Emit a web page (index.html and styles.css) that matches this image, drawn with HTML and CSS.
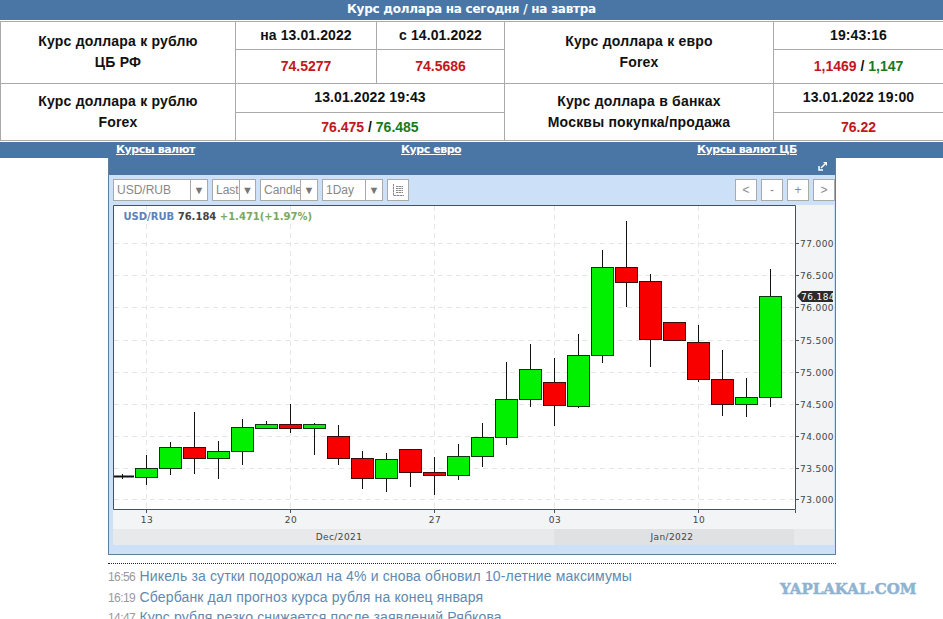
FILE: index.html
```html
<!DOCTYPE html>
<html lang="ru">
<head>
  <meta charset="UTF-8" />
  <title>Курс доллара</title>
  <link rel="stylesheet" href="styles.css">
</head>
<body>
  <div class="title-bar">Курс доллара на сегодня / на завтра</div>
  <table class="rates">
    <colgroup>
      <col class="c1"><col class="c2"><col class="c3"><col class="c4"><col class="c5">
    </colgroup>
    <tr class="r1">
      <th rowspan="2">Курс доллара к рублю<br>ЦБ РФ</th>
      <td>на 13.01.2022</td>
      <td>с 14.01.2022</td>
      <th rowspan="2">Курс доллара к евро<br>Forex</th>
      <td>19:43:16</td>
    </tr>
    <tr class="r2">
      <td class="red">74.5277</td>
      <td class="red">74.5686</td>
      <td><span class="red">1,1469</span> / <span class="green">1,147</span></td>
    </tr>
    <tr class="r3">
      <th rowspan="2">Курс доллара к рублю<br>Forex</th>
      <td colspan="2">13.01.2022 19:43</td>
      <th rowspan="2">Курс доллара в банках<br>Москвы покупка/продажа</th>
      <td>13.01.2022 19:00</td>
    </tr>
    <tr class="r4">
      <td colspan="2"><span class="red">76.475</span> / <span class="green">76.485</span></td>
      <td class="red">76.22</td>
    </tr>
  </table>
  <div class="links-bar">
    <a href="#">Курсы валют</a>
    <a href="#">Курс евро</a>
    <a href="#">Курсы валют ЦБ</a>
  </div>

  <div class="widget">
    <div class="widget-head">
      <svg class="expand" width="9" height="9" viewBox="0 0 9 9">
        <path d="M5 0h4v4z" fill="#fff"/>
        <path d="M7 2L3 6M1 4v4h4" fill="none" stroke="#fff" stroke-width="1.500"/>
      </svg>
    </div>
    <div class="toolbar">
      <div class="sel sel-pair"><span>USD/RUB</span><i>▼</i></div>
      <div class="sel sel-last"><span>Last</span><i>▼</i></div>
      <div class="sel sel-type"><span>Candle</span><i>▼</i></div>
      <div class="sel sel-period"><span>1Day</span><i>▼</i></div>
      <div class="btn">
        <svg width="11" height="12" viewBox="0 0 11 12">
          <path d="M0.500 0v11.500H11M3 2.500h7M3 4.500h7M3 6.500h7M3 8.500h7" fill="none" stroke="#888" stroke-dasharray="2.500 .5"/>
        </svg>
      </div>
      <div class="zoom-btns">
        <div class="btn">&lt;</div>
        <div class="btn">-</div>
        <div class="btn">+</div>
        <div class="btn">&gt;</div>
      </div>
    </div>
    <svg class="chart" width="721" height="340" viewBox="113 205 721 340">
      <rect class="side" x="796" y="205" width="38" height="324"/>
      <rect class="side" x="113" y="510" width="721" height="19"/>
      <rect class="month" x="113" y="529" width="721" height="16"/>
      <rect class="month-cur" x="554" y="529" width="240" height="16"/>

      <path class="grid" d="M114 243.500H796M114 275.500H796M114 307.500H796M114 340.500H796M114 372.500H796M114 404.500H796M114 436.500H796M114 468.500H796M114 499.500H796M146.500 206V509M290.500 206V509M434.500 206V509M554.500 206V509M698.500 206V509"/>
      <path class="axis" d="M113.500 205.500H795.500V509.500H113.500ZM796 243.500h3M796 275.500h3M796 307.500h3M796 340.500h3M796 372.500h3M796 404.500h3M796 436.500h3M796 468.500h3M796 499.500h3M146.500 510v3M290.500 510v3M434.500 510v3M554.500 510v3M698.500 510v3M795.500 510v3"/>

      <text class="legend" x="123.500" y="220"><tspan fill="#5b82b8">USD/RUB</tspan> <tspan fill="#444">76.184</tspan> <tspan fill="#7aa860">+1.471(+1.97%)</tspan></text>

      <path class="wick" d="M122.500 474v5M146.500 455v30M170.500 442v33M194.500 412v62M218.500 441v38M242.500 419v46M266.500 421v8M290.500 404v29M314.500 423v32M338.500 425v40M362.500 451v38M386.500 453v39M410.500 449v38M434.500 457v38M458.500 444v36M482.500 423v44M506.500 362v83M530.500 344v63M554.500 358v68M578.500 334v74M602.500 250v113M626.500 221v86M650.500 274v93M698.500 325v57M722.500 350v66M746.500 378v39M770.500 269v138"/>
      <path class="doji" d="M114 476.500H134"/>

      <g class="up">
        <rect x="135.500" y="468.500" width="22" height="9"/>
        <rect x="159.500" y="447.500" width="22" height="21"/>
        <rect x="207.500" y="451.500" width="22" height="7"/>
        <rect x="231.500" y="427.500" width="22" height="24"/>
        <rect x="255.500" y="424.500" width="22" height="4"/>
        <rect x="303.500" y="424.500" width="22" height="4"/>
        <rect x="375.500" y="459.500" width="22" height="19"/>
        <rect x="447.500" y="456.500" width="22" height="19"/>
        <rect x="471.500" y="437.500" width="22" height="19"/>
        <rect x="495.500" y="399.500" width="22" height="38"/>
        <rect x="519.500" y="369.500" width="22" height="30"/>
        <rect x="567.500" y="355.500" width="22" height="51"/>
        <rect x="591.500" y="267.500" width="22" height="88"/>
        <rect x="735.500" y="397.500" width="22" height="7"/>
        <rect x="759.500" y="296.500" width="22" height="101"/>
      </g>
      <g class="down">
        <rect x="183.500" y="447.500" width="22" height="11"/>
        <rect x="279.500" y="424.500" width="22" height="4"/>
        <rect x="327.500" y="436.500" width="22" height="22"/>
        <rect x="351.500" y="458.500" width="22" height="20"/>
        <rect x="399.500" y="449.500" width="22" height="23"/>
        <rect x="423.500" y="472.500" width="22" height="3"/>
        <rect x="543.500" y="382.500" width="22" height="23"/>
        <rect x="615.500" y="267.500" width="22" height="15"/>
        <rect x="639.500" y="281.500" width="22" height="58"/>
        <rect x="663.500" y="322.500" width="22" height="18"/>
        <rect x="687.500" y="342.500" width="22" height="37"/>
        <rect x="711.500" y="379.500" width="22" height="25"/>
      </g>

      <g class="tick">
        <text x="800" y="247">77.000</text>
        <text x="800" y="279">76.500</text>
        <text x="800" y="311">76.000</text>
        <text x="800" y="344">75.500</text>
        <text x="800" y="376">75.000</text>
        <text x="800" y="408">74.500</text>
        <text x="800" y="440">74.000</text>
        <text x="800" y="472">73.500</text>
        <text x="800" y="503">73.000</text>
        <text x="147" y="523" text-anchor="middle">13</text>
        <text x="291" y="523" text-anchor="middle">20</text>
        <text x="435" y="523" text-anchor="middle">27</text>
        <text x="555" y="523" text-anchor="middle">03</text>
        <text x="699" y="523" text-anchor="middle">10</text>
        <text x="339" y="540" text-anchor="middle">Dec/2021</text>
        <text x="672" y="540" text-anchor="middle">Jan/2022</text>
      </g>
      <path class="price-tag" d="M797 296l5-5h31v11h-31z"/>
      <text class="price-text" x="801" y="300">76.184</text>
    </svg>
  </div>

  <div class="news">
    <div class="news-row"><span class="time">16:56</span> <a href="#">Никель за сутки подорожал на 4% и снова обновил 10-летние максимумы</a></div>
    <div class="news-row"><span class="time">16:19</span> <a href="#">Сбербанк дал прогноз курса рубля на конец января</a></div>
    <div class="news-row"><span class="time">14:47</span> <a href="#">Курс рубля резко снижается после заявлений Рябкова</a></div>
  </div>
  <div class="watermark">YAPLAKAL.COM</div>
</body>
</html>
```

FILE: styles.css
```css
html, body {
  margin: 0;
  padding: 0;
  height: 619px;
  overflow: hidden;
  background: #fff;
}

body {
  position: relative;
  font-family: "Liberation Sans", Arial, sans-serif;
}

.title-bar {
  height: 20px;
  line-height: 19px;
  background: #4a76a6;
  color: #fff;
  text-align: center;
  font-family: "DejaVu Sans", sans-serif;
  font-size: 12px;
  font-weight: bold;
  letter-spacing: -0.25px;
}

.rates {
  width: 943px;
  margin-top: 1px;
  border-collapse: collapse;
  table-layout: fixed;
  box-sizing: border-box;
}

.rates .c1 { width: 235px; }
.rates .c2 { width: 141px; }
.rates .c3 { width: 128px; }
.rates .c4 { width: 269px; }
.rates .c5 { width: 170px; }

.rates th, .rates td {
  border: 1px solid #aaa;
  padding: 0;
  text-align: center;
  font-size: 14px;
  font-weight: bold;
  color: #111;
}

.rates th {
  line-height: 21px;
  letter-spacing: 0.2px;
}

.rates .r1 td, .rates .r3 td {
  letter-spacing: 0.1px;
}

.r1 { height: 28px; }
.r2 { height: 34px; }
.r3 { height: 29px; }
.r4 { height: 28px; }

.r1 th, .r1 td, .r2 td, .r3 td {
  padding-bottom: 2px;
}

.r3 th {
  padding-bottom: 0;
}

.rates .red { color: #c4161c; }
.rates .green { color: #187a1e; }

.links-bar {
  height: 16px;
  margin-top: 1px;
  padding-left: 116px;
  display: grid;
  grid-template-columns: 285px 296px auto;
  background: #4a76a6;
  line-height: 15px;
}

.links-bar a {
  color: #fff;
  font-family: "DejaVu Sans", sans-serif;
  font-size: 11px;
  font-weight: bold;
  letter-spacing: -0.45px;
}

.widget {
  width: 728px;
  height: 397px;
  margin-left: 108px;
  box-sizing: border-box;
  background: #cce0f7;
  border: 1px solid #5d7f99;
  border-top: 0;
}

.widget-head {
  height: 17px;
  background: #4a76a6;
  display: flex;
  justify-content: flex-end;
  padding: 4px 8px 0 0;
  box-sizing: border-box;
}

.toolbar {
  height: 30px;
  padding: 4px 0 0 4px;
  box-sizing: border-box;
  display: flex;
  gap: 4px;
}

.sel, .btn {
  height: 22px;
  box-sizing: border-box;
  background: #fff;
  border: 1px solid #aaa;
  color: #888;
  font-size: 12px;
  line-height: 20px;
}

.sel {
  display: flex;
  overflow: hidden;
}

.sel span {
  flex: 1;
  padding-left: 3px;
  overflow: hidden;
  white-space: nowrap;
  border-right: 1px solid #aaa;
}

.sel i {
  font-style: normal;
  font-size: 11px;
  text-align: center;
  color: #777;
}

.sel-pair { width: 95px; }
.sel-pair i { width: 16px; }
.sel-last { width: 44px; }
.sel-last i { width: 15px; }
.sel-type { width: 58px; }
.sel-type i { width: 16px; }
.sel-period { width: 61px; }
.sel-period i { width: 16px; }

.btn {
  width: 22px;
  display: flex;
  align-items: center;
  justify-content: center;
}

.zoom-btns {
  margin-left: auto;
  display: flex;
  gap: 4px;
}

.chart {
  display: block;
  margin-left: 4px;
  background: #fff;
}

.side { fill: #f2f4f5; }
.month { fill: #e8e9ea; }
.month-cur { fill: #e0e1e2; }

.grid {
  fill: none;
  stroke: #e6e6e6;
  stroke-dasharray: 5 4;
}

.axis {
  fill: none;
  stroke: #44525c;
}

.legend {
  font-family: "DejaVu Sans", sans-serif;
  font-size: 10px;
  font-weight: bold;
}

.wick {
  fill: none;
  stroke: #111;
}

.doji {
  fill: none;
  stroke: #111;
  stroke-width: 2;
}

.up rect {
  fill: #00f000;
  stroke: #0c3a0c;
}

.down rect {
  fill: #f80000;
  stroke: #3a0c0c;
}

.tick {
  font-family: "DejaVu Sans", sans-serif;
  font-size: 9px;
  letter-spacing: 0.4px;
  fill: #444;
}

.price-tag { fill: #2b2b2b; }

.price-text {
  font-family: "DejaVu Sans", sans-serif;
  font-size: 9px;
  letter-spacing: 0.4px;
  fill: #fff;
}

.news {
  width: 728px;
  margin: 8px 0 0 108px;
  padding-top: 2px;
  border-top: 1px dotted #222;
}

.news-row {
  height: 20.500px;
  line-height: 20px;
  white-space: nowrap;
}

.news-row a {
  color: #6189b0;
  font-size: 14px;
  letter-spacing: 0.15px;
  text-decoration: none;
}

.time {
  color: #999;
  font-size: 12px;
  letter-spacing: -0.6px;
}

.watermark {
  position: absolute;
  left: 780px;
  top: 580px;
  color: #8fb3d0;
  font-family: "DejaVu Serif", serif;
  font-size: 15px;
  font-weight: bold;
  -webkit-text-stroke: 0.5px #8fb3d0;
}
```
